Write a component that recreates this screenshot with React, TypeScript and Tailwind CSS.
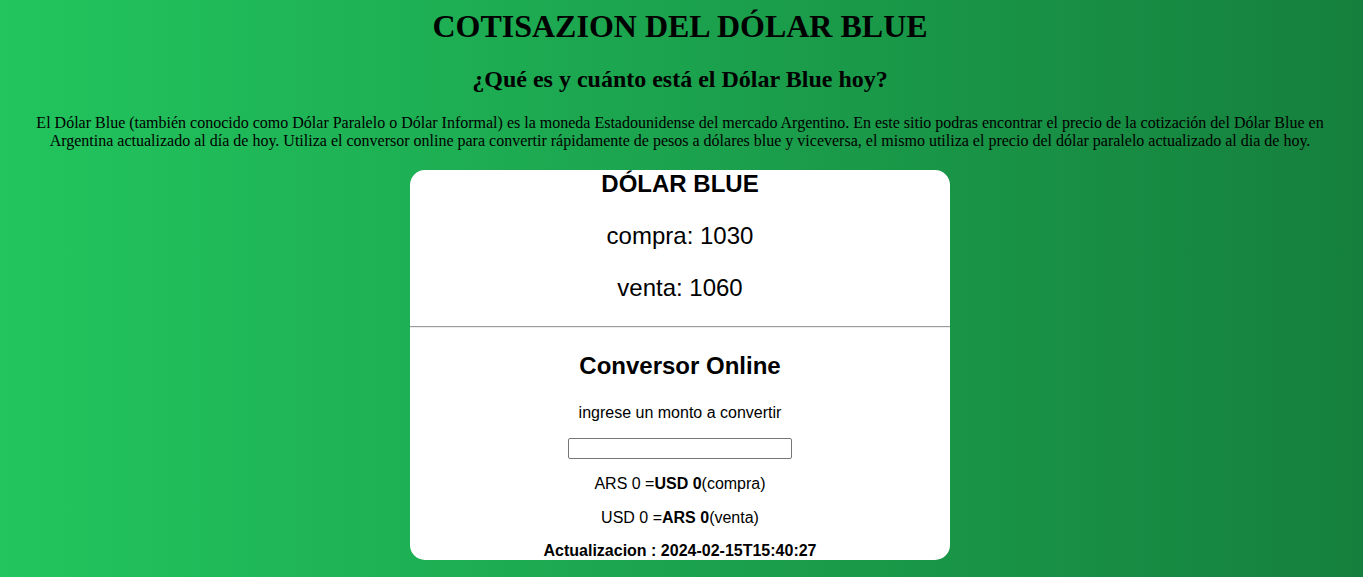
import React from "react";

export default function App() {
  return (
    <div className="min-h-screen bg-[linear-gradient(to_right,#22c55e,#15803d)] pl-2 pr-[11px] pt-2 pb-4 text-black">
      <h1 className="font-['Liberation_Serif','Times_New_Roman',serif] text-[32px] leading-[36.8px] font-bold text-center">
        COTISAZION DEL DÓLAR BLUE
      </h1>
      <h2 className="mt-[21.5px] font-['Liberation_Serif','Times_New_Roman',serif] text-[24px] leading-[27.6px] font-bold text-center">
        ¿Qué es y cuánto está el Dólar Blue hoy?
      </h2>
      <p className="mt-[20px] font-['Liberation_Serif','Times_New_Roman',serif] text-[16px] leading-[18.4px] text-center">
        El Dólar Blue (también conocido como Dólar Paralelo o Dólar Informal) es la moneda Estadounidense del mercado Argentino. En este sitio podras encontrar el precio de la cotización del Dólar Blue en
        <br />
        Argentina actualizado al día de hoy. Utiliza el conversor online para convertir rápidamente de pesos a dólares blue y viceversa, el mismo utiliza el precio del dólar paralelo actualizado al dia de hoy.
      </p>
      <div className="mt-[19px] mx-auto w-[540px] h-[390px] bg-white rounded-[15px] overflow-hidden font-['Liberation_Sans',Arial,sans-serif] text-center">
        <h2 className="text-[24px] leading-[27.6px] font-bold">DÓLAR BLUE</h2>
        <p className="mt-[25px] text-[24px] leading-[27.6px]">compra: 1030</p>
        <p className="mt-6 text-[24px] leading-[27.6px]">venta: 1060</p>
        <div className="mt-[25px] h-[2px] border-t border-t-[#9c9c9c] border-b border-b-[#ececec]" />
        <h2 className="mt-[24px] text-[24px] leading-[27.6px] font-bold">Conversor Online</h2>
        <p className="mt-6 text-[16px] leading-[18.4px]">ingrese un monto a convertir</p>
        <input
          type="text"
          className="block mx-auto mt-[15.5px] w-[224px] h-[21px] border border-[#767676] rounded-[2px] bg-white outline-none"
        />
        <p className="mt-[16px] text-[16px] leading-[18.4px]">
          ARS 0 =<b>USD 0</b>(compra)
        </p>
        <p className="mt-4 text-[16px] leading-[18.4px]">
          USD 0 =<b>ARS 0</b>(venta)
        </p>
        <p className="mt-[14px] text-[16px] leading-[18.4px] font-bold">
          Actualizacion : 2024-02-15T15:40:27
        </p>
      </div>
    </div>
  );
}
